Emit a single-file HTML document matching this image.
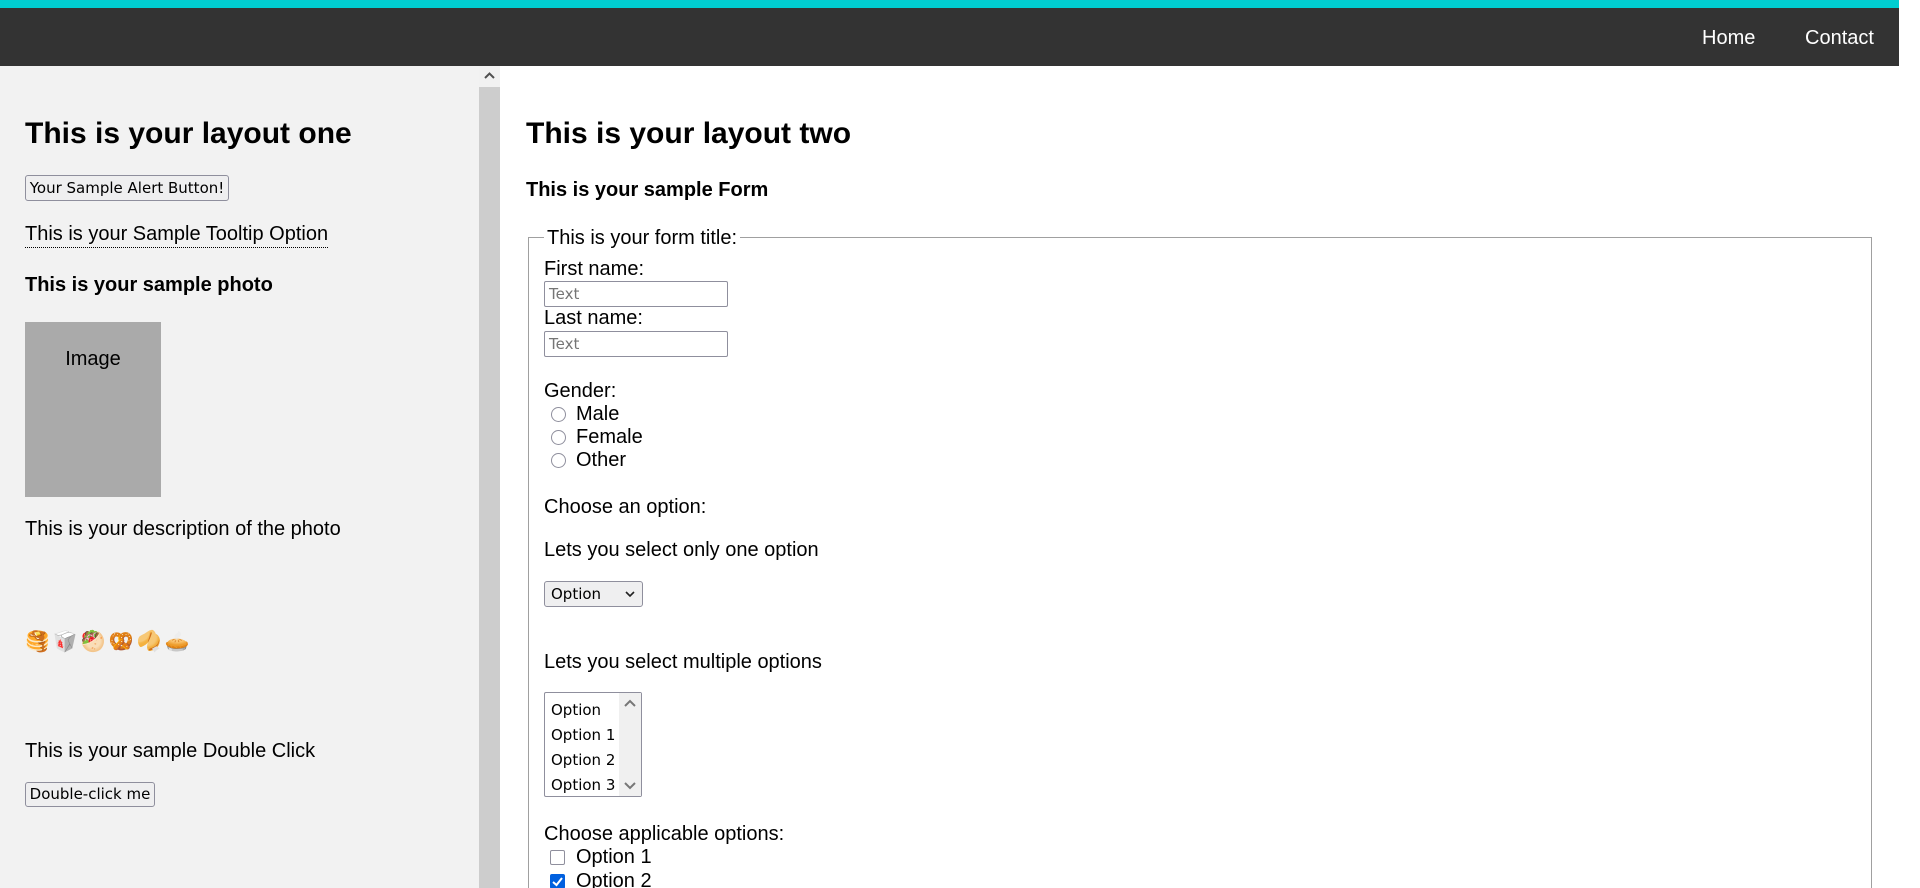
<!DOCTYPE html>
<html style="overflow:hidden;height:888px"><head><meta charset="utf-8"><style>
*{margin:0;padding:0;box-sizing:border-box}
body{width:1920px;height:888px;overflow:hidden;background:#fff;font-family:"Liberation Sans",Arial,sans-serif;color:#000;position:relative}
.a{position:absolute;white-space:nowrap}
.t{font-size:20px;line-height:20px}
.h{font-size:30px;font-weight:bold;line-height:32px}
.b{font-size:20px;font-weight:bold;line-height:20px}
.btn{position:absolute;background:#efeff0;border:1px solid #8f8f9d;border-radius:3px;font-family:"DejaVu Sans",sans-serif;font-size:15px;color:#000;text-align:center}
.inp{position:absolute;border:1px solid #8f8f9d;border-radius:2px;background:#fff;font-family:"DejaVu Sans",sans-serif;font-size:15px;color:#757575;padding-left:4px;line-height:24px}
.rad{position:absolute;width:15px;height:15px;border:1.5px solid #8f8f9d;border-radius:50%;background:#fff}
.opt{position:absolute;font-family:"DejaVu Sans",sans-serif;font-size:15px;line-height:16px}
</style></head><body>
<div class="a" style="left:0;top:0;width:1899px;height:8px;background:#00ced1"></div>
<div class="a" style="left:0;top:8px;width:1899px;height:58px;background:#333"></div>
<div class="a t" style="left:1702px;top:28px;color:#fff">Home</div>
<div class="a t" style="left:1805px;top:28px;color:#fff">Contact</div>

<div class="a" style="left:0;top:66px;width:479px;height:822px;background:#f2f2f2"></div>
<div class="a" style="left:479px;top:66px;width:21px;height:822px;background:#cdcdcd"></div>
<div class="a" style="left:479px;top:66px;width:21px;height:21px;background:#f1f1f1"></div>
<svg class="a" style="left:483px;top:70px" width="13" height="12"><path d="M2 8 L6.5 3.5 L11 8" stroke="#505050" stroke-width="2" fill="none"/></svg>

<div class="a h" style="left:25px;top:118px">This is your layout one</div>
<div class="btn" style="left:25px;top:175px;width:204px;height:26px;line-height:24px">Your Sample Alert Button!</div>
<div class="a t" style="left:25px;top:224px;border-bottom:1px dotted #000;padding-bottom:3px">This is your Sample Tooltip Option</div>
<div class="a b" style="left:25px;top:275px">This is your sample photo</div>
<div class="a" style="left:25px;top:322px;width:136px;height:175px;background:#aaa"></div>
<div class="a t" style="left:25px;top:349px;width:136px;text-align:center">Image</div>
<div class="a t" style="left:25px;top:519px">This is your description of the photo</div>
<div class="a" style="left:25px;top:630px;font-size:20px;line-height:22px;letter-spacing:3px;font-family:'Noto Color Emoji','DejaVu Sans',sans-serif">🥞🥡🥙🥨🥠🥧</div>
<div class="a t" style="left:25px;top:741px">This is your sample Double Click</div>
<div class="btn" style="left:25px;top:782px;width:130px;height:25px;line-height:23px">Double-click me</div>

<div class="a h" style="left:526px;top:118px">This is your layout two</div>
<div class="a b" style="left:526px;top:180px">This is your sample Form</div>
<div class="a" style="left:528px;top:237px;width:1344px;height:660px;border:1.5px solid #a0a0a0"></div>
<div class="a t" style="left:544px;top:228px;background:#fff;padding:0 3px">This is your form title:</div>
<div class="a t" style="left:544px;top:259px">First name:</div>
<div class="inp" style="left:544px;top:281px;width:184px;height:26px">Text</div>
<div class="a t" style="left:544px;top:308px">Last name:</div>
<div class="inp" style="left:544px;top:331px;width:184px;height:26px">Text</div>
<div class="a t" style="left:544px;top:381px">Gender:</div>
<div class="rad" style="left:551px;top:407px"></div><div class="a t" style="left:576px;top:404px">Male</div>
<div class="rad" style="left:551px;top:430px"></div><div class="a t" style="left:576px;top:427px">Female</div>
<div class="rad" style="left:551px;top:453px"></div><div class="a t" style="left:576px;top:450px">Other</div>
<div class="a t" style="left:544px;top:497px">Choose an option:</div>
<div class="a t" style="left:544px;top:540px">Lets you select only one option</div>
<div class="btn" style="left:544px;top:581px;width:99px;height:26px;text-align:left;padding-left:6px;line-height:24px">Option</div>
<svg class="a" style="left:624px;top:589px" width="12" height="10"><path d="M2 3 L6 7 L10 3" stroke="#222" stroke-width="1.6" fill="none"/></svg>
<div class="a t" style="left:544px;top:652px">Lets you select multiple options</div>
<div class="a" style="left:544px;top:692px;width:98px;height:105px;border:1px solid #8f8f9d;border-radius:2px;background:#fff"></div>
<div class="a" style="left:619px;top:693px;width:22px;height:103px;background:#f0f0f0"></div>
<svg class="a" style="left:623px;top:698px" width="14" height="12"><path d="M2 8 L7 3 L12 8" stroke="#777" stroke-width="2" fill="none"/></svg>
<svg class="a" style="left:623px;top:780px" width="14" height="12"><path d="M2 3 L7 8 L12 3" stroke="#777" stroke-width="2" fill="none"/></svg>
<div class="opt" style="left:551px;top:702px">Option</div>
<div class="opt" style="left:551px;top:727px">Option 1</div>
<div class="opt" style="left:551px;top:752px">Option 2</div>
<div class="opt" style="left:551px;top:777px">Option 3</div>
<div class="a t" style="left:544px;top:824px">Choose applicable options:</div>
<div class="a" style="left:550px;top:850px;width:15px;height:15px;border:1.5px solid #8f8f9d;border-radius:2px;background:#fff"></div>
<div class="a t" style="left:576px;top:847px">Option 1</div>
<div class="a" style="left:550px;top:874px;width:15px;height:15px;border-radius:2px;background:#0060df"></div>
<svg class="a" style="left:550px;top:874px" width="15" height="15"><path d="M3 8 L6.5 11 L12 4" stroke="#fff" stroke-width="2" fill="none"/></svg>
<div class="a t" style="left:576px;top:871px">Option 2</div>
</body></html>
